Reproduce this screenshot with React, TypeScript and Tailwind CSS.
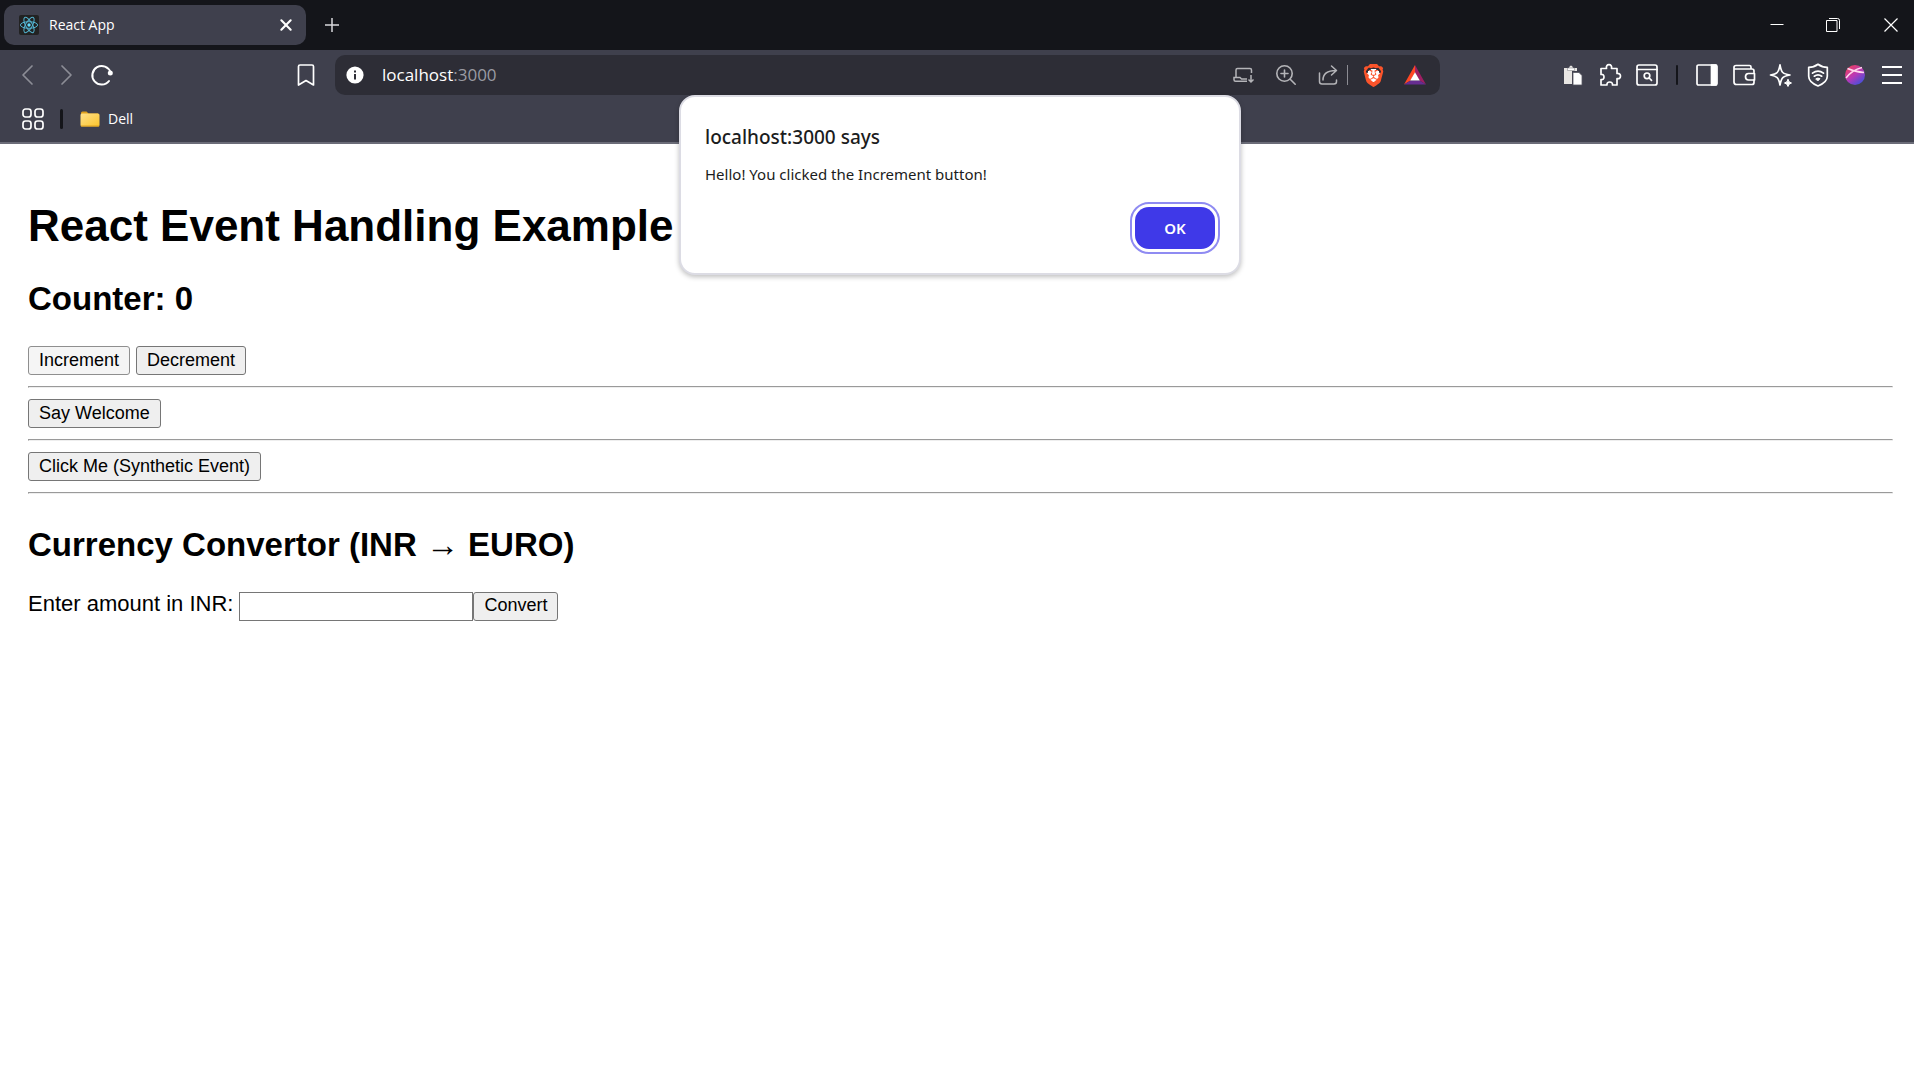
import { useState } from "react";
import type { ReactNode } from "react";
import { SiBrave } from "react-icons/si";

const UI_FONT = "font-['Open_Sans','Noto_Sans',sans-serif]";

type IconProps = { children: ReactNode; className?: string };

function Icon({ children, className = "size-6" }: IconProps) {
  return (
    <svg
      viewBox="0 0 24 24"
      fill="none"
      stroke="currentColor"
      strokeWidth="1.7"
      strokeLinecap="round"
      strokeLinejoin="round"
      className={className}
      aria-hidden="true"
    >
      {children}
    </svg>
  );
}

function IconButton({ label, children, className = "" }: { label: string; children: ReactNode; className?: string }) {
  return (
    <button type="button" aria-label={label} className={`flex shrink-0 items-center justify-center ${className}`}>
      {children}
    </button>
  );
}

function ReactLogo() {
  return (
    <svg viewBox="0 0 20 20" className="size-5" aria-hidden="true">
      <rect width="20" height="20" rx="2" fill="#222" />
      <g fill="none" stroke="#53b4d0" strokeWidth="1">
        <ellipse cx="10" cy="10" rx="8.6" ry="3.3" />
        <ellipse cx="10" cy="10" rx="8.6" ry="3.3" transform="rotate(60 10 10)" />
        <ellipse cx="10" cy="10" rx="8.6" ry="3.3" transform="rotate(120 10 10)" />
      </g>
      <circle cx="10" cy="10" r="1.7" fill="#61dafb" />
    </svg>
  );
}

function TabStrip() {
  return (
    <div className="flex h-[50px] items-center bg-[#14151a] pl-1 text-white">
      <div className="flex h-10 w-[302px] items-center rounded-[10px] bg-[#3f404d] pr-3 pl-[15px]">
        <ReactLogo />
        <span className="ml-2.5 flex-1 text-[14px] leading-5">React App</span>
        <IconButton label="Close tab" className="size-4">
          <Icon className="size-3.5">
            <path d="M4 4l16 16M20 4L4 20" strokeWidth="3.6" />
          </Icon>
        </IconButton>
      </div>
      <IconButton label="New tab" className="ml-[18px] size-4 text-[#d8d8dc]">
        <svg viewBox="0 0 16 16" className="size-4" stroke="currentColor" strokeWidth="1.5" aria-hidden="true">
          <path d="M8 1v14M1 8h14" />
        </svg>
      </IconButton>
      <div className="ml-auto flex">
        <IconButton label="Minimize" className="h-[50px] w-14">
          <svg viewBox="0 0 14 14" className="size-3.5" stroke="white" aria-hidden="true">
            <path d="M0.5 6.5h13" />
          </svg>
        </IconButton>
        <IconButton label="Restore" className="h-[50px] w-14">
          <svg viewBox="0 0 14 14" className="size-3.5" stroke="white" fill="none" aria-hidden="true">
            <path d="M0.5 2.5h10.5v11h-10.5z" />
            <path d="M3 0.5h8.5q2 0 2 2V11" />
          </svg>
        </IconButton>
        <IconButton label="Close" className="mr-[-6px] h-[50px] w-[59px]">
          <svg viewBox="0 0 14 14" className="size-3.5" stroke="white" strokeWidth="1.2" aria-hidden="true">
            <path d="M0.5 0.5l13 13M13.5 0.5l-13 13" />
          </svg>
        </IconButton>
      </div>
    </div>
  );
}

function AddressBar() {
  return (
    <div className="ml-[17px] flex h-10 w-[1105px] min-w-0 items-center rounded-[10px] bg-[#2d2d36] pr-[13px] pl-[11px]">
      <IconButton label="Site information">
        <svg viewBox="0 0 18 18" className="size-[18px]" aria-hidden="true">
          <circle cx="9" cy="9" r="8.6" fill="white" />
          <rect x="8" y="4.5" width="2" height="2" fill="#2d2d36" />
          <rect x="8" y="8" width="2" height="5.5" fill="#2d2d36" />
        </svg>
      </IconButton>
      <div className="ml-[18px] flex-1 text-[17px] leading-6 text-[#9a9ba3]">
        <span className="text-white">localhost</span>:3000
      </div>
      <div className="flex items-center text-[#b4b4b8]">
        <IconButton label="Install app">
          <svg viewBox="0 0 22 20" className="h-5 w-[22px]" fill="none" stroke="currentColor" strokeWidth="1.5" aria-hidden="true">
            <path d="M3 12V5q0-1.500 1.500-1.500H17q1.500 0 1.500 1.500v3M14 16.300H2.500q-1.500 0-1.500-1.500V12.500h6l1.500 1.500H14M18 10v7M15.500 14.500L18 17l2.500-2.500" />
          </svg>
        </IconButton>
        <IconButton label="Zoom" className="ml-5">
          <svg viewBox="0 0 22 22" className="size-[22px]" fill="none" stroke="currentColor" strokeWidth="1.6" strokeLinecap="round" aria-hidden="true">
            <circle cx="9.5" cy="9.5" r="7.7" />
            <path d="M15.200 15.200l5 5M9.500 6v7M6 9.500h7" />
          </svg>
        </IconButton>
        <IconButton label="Share" className="ml-5">
          <svg viewBox="0 0 22 22" className="size-[22px]" fill="none" stroke="currentColor" strokeWidth="1.5" strokeLinecap="round" strokeLinejoin="round" aria-hidden="true">
            <path d="M2.500 9v8.500q0 2.500 2.500 2.500h12q2.500 0 2.500-2.500V16" />
            <path d="M6 16q0-9.500 13-9.500M14.500 2l5 4.500-5 4.500" />
          </svg>
        </IconButton>
        <span className="ml-2 h-5 w-px bg-[#8c8c93]" />
        <IconButton label="Brave Shields" className="ml-3.5">
          <span className="flex items-center justify-center bg-[radial-gradient(circle,white_55%,transparent_56%)] bg-[length:17px_17px] bg-center bg-no-repeat">
            <SiBrave className="size-[23px] text-[#fb542b]" />
          </span>
        </IconButton>
        <IconButton label="Brave Rewards" className="ml-[18px]">
          <svg viewBox="0 0 24 22" className="h-[22px] w-6" aria-hidden="true">
            <path d="M12 1L1 20.500l6.500-4L12 8.500z" fill="#ff4724" />
            <path d="M12 1l11 19.500-6.500-4L12 8.500z" fill="#9e1f63" />
            <path d="M1 20.500h22l-6.500-4h-9z" fill="#662d91" />
            <path d="M12 8.200l4.800 8.400H7.200z" fill="white" />
          </svg>
        </IconButton>
      </div>
    </div>
  );
}

function Extensions() {
  return (
    <div className="ml-auto flex items-center gap-[13px] text-white">
      <IconButton label="Paste">
        <svg viewBox="0 0 24 24" className="size-6" aria-hidden="true">
          <path d="M3 5h5q.5-2.500 2-2.500t2 2.500h4v3h-5v13H3z" fill="#e8e6e3" />
          <path d="M6.500 5h7v2.500h-7z" fill="#fff" stroke="#8b8b90" strokeWidth=".6" />
          <path d="M12 9.500h6l3 3V22h-9z" fill="white" stroke="#55565f" strokeWidth=".8" />
        </svg>
      </IconButton>
      <IconButton label="Extensions">
        <Icon>
          <path d="M3 5.500h5.500c-.5-2.500.5-3.800 2.500-3.800s3 1.300 2.500 3.800H19v5c2.200-.3 3.500.7 3.500 2.600s-1.300 2.900-3.500 2.500V22h-4.500c.2-2-.9-3-2.800-3s-3 1-2.700 3H3v-5.500c2 .3 3-.7 3-2.500s-1-2.800-3-2.500z" />
        </Icon>
      </IconButton>
      <IconButton label="Search tabs">
        <Icon>
          <rect x="2" y="2" width="20" height="20" rx="2" />
          <path d="M2 6.500h20" />
          <circle cx="12" cy="12.800" r="2.800" />
          <path d="M14.200 15l2.300 2.300" />
        </Icon>
      </IconButton>
      <span className="mx-1 h-5 w-0.5 rounded bg-[#14151a]" />
      <IconButton label="Sidebar">
        <Icon>
          <rect x="2" y="2" width="20" height="20" rx="1.500" />
          <path d="M16.500 2H21v20h-4.500z" fill="currentColor" />
        </Icon>
      </IconButton>
      <IconButton label="Wallet">
        <Icon>
          <path d="M22 9.500V8q0-2-2-2H2.500M19 6V4q0-1.500-1.500-1.500H4Q2 2.500 2 4.500V19q0 2.500 2.500 2.500H20q2 0 2-2V17" />
          <path d="M22.500 10.500V17H16.500q-3 0-3-3.200t3-3.300z" />
        </Icon>
      </IconButton>
      <IconButton label="Leo AI">
        <Icon>
          <path d="M11 1.800q1 6 2.800 7.700T21 12q-5.500 1-7.200 2.700T11 22q-1-5.600-2.800-7.300T1.500 12q5-.8 6.700-2.500T11 1.800z" />
          <path d="M19 16.500q.5 3 3.500 3.500-3 .5-3.500 3.500-.5-3-3.500-3.500 3-.5 3.500-3.500z" fill="currentColor" strokeWidth="1" />
        </Icon>
      </IconButton>
      <IconButton label="VPN">
        <Icon>
          <path d="M12 1.300q4 3 9.300 3v9q0 6-9.300 9.700-9.300-3.700-9.300-9.700v-9q5.300 0 9.300-3z" />
          <path d="M6.500 10.200q5.500-4.300 11 0M8.300 13.200q3.700-2.800 7.400 0" />
          <path d="M10 15.700q2-1.200 4 0l-2 2z" fill="currentColor" strokeWidth="1" />
        </Icon>
      </IconButton>
      <IconButton label="Profile">
        <svg viewBox="0 0 24 24" className="size-6" aria-hidden="true">
          <defs>
            <linearGradient id="profile-fill" x1="0.2" y1="0.1" x2="0.8" y2="0.9">
              <stop offset="0" stopColor="#e8406a" />
              <stop offset="0.5" stopColor="#b838b8" />
              <stop offset="1" stopColor="#4a4fd8" />
            </linearGradient>
          </defs>
          <circle cx="12" cy="12" r="10" fill="url(#profile-fill)" />
          <path d="M4.500 5.500Q12 9 21 9.500M3 15Q9 7 19 4.500" fill="none" stroke="#ffd6ee" strokeWidth="1.5" />
        </svg>
      </IconButton>
      <IconButton label="Menu">
        <Icon>
          <path d="M2 4h20M2 12h20M2 20h20" strokeLinecap="butt" strokeWidth="2" />
        </Icon>
      </IconButton>
    </div>
  );
}

function Toolbar() {
  return (
    <div className="flex h-[50px] items-center bg-[#3f404d] pr-2.5 pl-4 text-white">
      <IconButton label="Back" className="text-[#8c8d96]">
        <Icon>
          <path d="M16 3L7 12l9 9" />
        </Icon>
      </IconButton>
      <IconButton label="Forward" className="ml-3.5 text-[#8c8d96]">
        <Icon>
          <path d="M8 3l9 9-9 9" />
        </Icon>
      </IconButton>
      <IconButton label="Reload" className="ml-3">
        <Icon>
          <path d="M20.500 9.500A9.300 9.300 0 1 0 19 18" strokeWidth="2" />
          <circle cx="20.300" cy="10" r="2.500" fill="currentColor" stroke="none" />
        </Icon>
      </IconButton>
      <IconButton label="Bookmark this page" className="ml-[180px]">
        <Icon>
          <path d="M4.500 3.500Q4.500 2 6 2h12q1.500 0 1.500 1.500V22L12 17.500 4.500 22z" />
        </Icon>
      </IconButton>
      <AddressBar />
      <Extensions />
    </div>
  );
}

function BookmarksBar() {
  return (
    <div className="flex h-11 items-center border-b-2 border-[#6b6c78] bg-[#3f404d] pb-1 pl-[21px] text-white">
      <IconButton label="All bookmarks">
        <Icon>
          <rect x="2" y="2" width="8" height="8" rx="2.500" />
          <rect x="14" y="2" width="8" height="8" rx="2.500" />
          <rect x="2" y="14" width="8" height="8" rx="2.500" />
          <rect x="14" y="14" width="8" height="8" rx="2.500" />
        </Icon>
      </IconButton>
      <span className="ml-[15px] h-5 w-[3px] rounded bg-[#14151a]" />
      <button type="button" className="ml-[17px] flex items-center gap-2">
        <svg viewBox="0 0 20 16" className="h-4 w-5" aria-hidden="true">
          <defs>
            <linearGradient id="folder-fill" x1="0" y1="0" x2="1" y2="1">
              <stop offset="0" stopColor="#ffe08a" />
              <stop offset="1" stopColor="#fcc52c" />
            </linearGradient>
          </defs>
          <path d="M1 2Q1 .5 2.500.5h4L8.500 2.500H18V6H1z" fill="#dfa01c" />
          <rect x="0.5" y="2.500" width="19" height="13" rx="1.500" fill="url(#folder-fill)" />
          <path d="M1 15h18" stroke="#dfa01c" />
        </svg>
        <span className="text-[14px] leading-5">Dell</span>
      </button>
    </div>
  );
}

function PageButton({ children, onClick, hovered = false }: { children: ReactNode; onClick?: () => void; hovered?: boolean }) {
  return (
    <button
      type="button"
      onClick={onClick}
      className={`h-[29px] rounded-[3px] border px-2.5 pb-0.5 text-[18px] leading-5 whitespace-nowrap text-black ${
        hovered ? "border-[#8f8f8f] bg-[#f5f5f5]" : "border-[#767676] bg-[#efefef]"
      }`}
    >
      {children}
    </button>
  );
}

function Divider() {
  return <hr className="my-[11px] h-0.5 border border-t-[#9a9a9a] border-r-[#eeeeee] border-b-[#eeeeee] border-l-[#9a9a9a]" />;
}

function EventPage() {
  const [amount, setAmount] = useState("");
  return (
    <main className="pt-[57px] pr-[21px] pl-7 font-['Liberation_Sans',Arial,sans-serif] text-black">
      <h1 className="text-[44px] leading-[50px] font-bold">React Event Handling Example</h1>
      <h2 className="mt-[29px] text-[33px] leading-[38px] font-bold">Counter: 0</h2>
      <div className="mt-7 flex gap-1.5">
        <PageButton hovered>Increment</PageButton>
        <PageButton>Decrement</PageButton>
      </div>
      <Divider />
      <div className="flex">
        <PageButton>Say Welcome</PageButton>
      </div>
      <Divider />
      <div className="flex">
        <PageButton>Click Me (Synthetic Event)</PageButton>
      </div>
      <Divider />
      <h2 className="mt-8 text-[33px] leading-[38px] font-bold">Currency Convertor (INR → EURO)</h2>
      <form className="mt-[27px] flex items-baseline" onSubmit={(event) => event.preventDefault()}>
        <label htmlFor="amount" className="text-[22px] leading-[25px]">
          Enter amount in INR:
        </label>
        <input
          id="amount"
          type="text"
          value={amount}
          onChange={(event) => setAmount(event.target.value)}
          className="ml-1.5 h-[29px] w-[234px] border border-[#767676] bg-white px-1 pb-0.5 text-[18px] leading-5"
        />
        <PageButton>Convert</PageButton>
      </form>
    </main>
  );
}

function AlertDialog({ onClose }: { onClose: () => void }) {
  return (
    <div className="pointer-events-none absolute inset-x-0 top-[95px] flex justify-center pl-1.5">
      <div
        role="alertdialog"
        aria-labelledby="alert-title"
        aria-describedby="alert-message"
        className="pointer-events-auto flex w-[562px] flex-col rounded-2xl border-2 border-[#dcdce4] bg-white p-6 font-['Noto_Sans','Open_Sans',sans-serif] text-[#1b1c20] shadow-[0_2px_5px_rgba(0,0,0,0.25)]"
      >
        <h2 id="alert-title" className="text-[19px] leading-8 font-medium">
          localhost:3000 says
        </h2>
        <p id="alert-message" className="mt-2 text-[15px] leading-[26px]">
          Hello! You clicked the Increment button!
        </p>
        <button
          type="button"
          onClick={onClose}
          className="mt-5 h-[42px] w-20 self-end rounded-[14px] bg-[#3f39e8] text-[15px] font-semibold text-white outline-2 outline-offset-3 outline-[#8f8bf2]"
        >
          OK
        </button>
      </div>
    </div>
  );
}

export default function App() {
  const [alertOpen, setAlertOpen] = useState(true);
  return (
    <div className={`relative min-h-screen overflow-x-clip bg-white ${UI_FONT}`}>
      <header>
        <TabStrip />
        <Toolbar />
        <BookmarksBar />
      </header>
      <EventPage />
      {alertOpen && <AlertDialog onClose={() => setAlertOpen(false)} />}
    </div>
  );
}
